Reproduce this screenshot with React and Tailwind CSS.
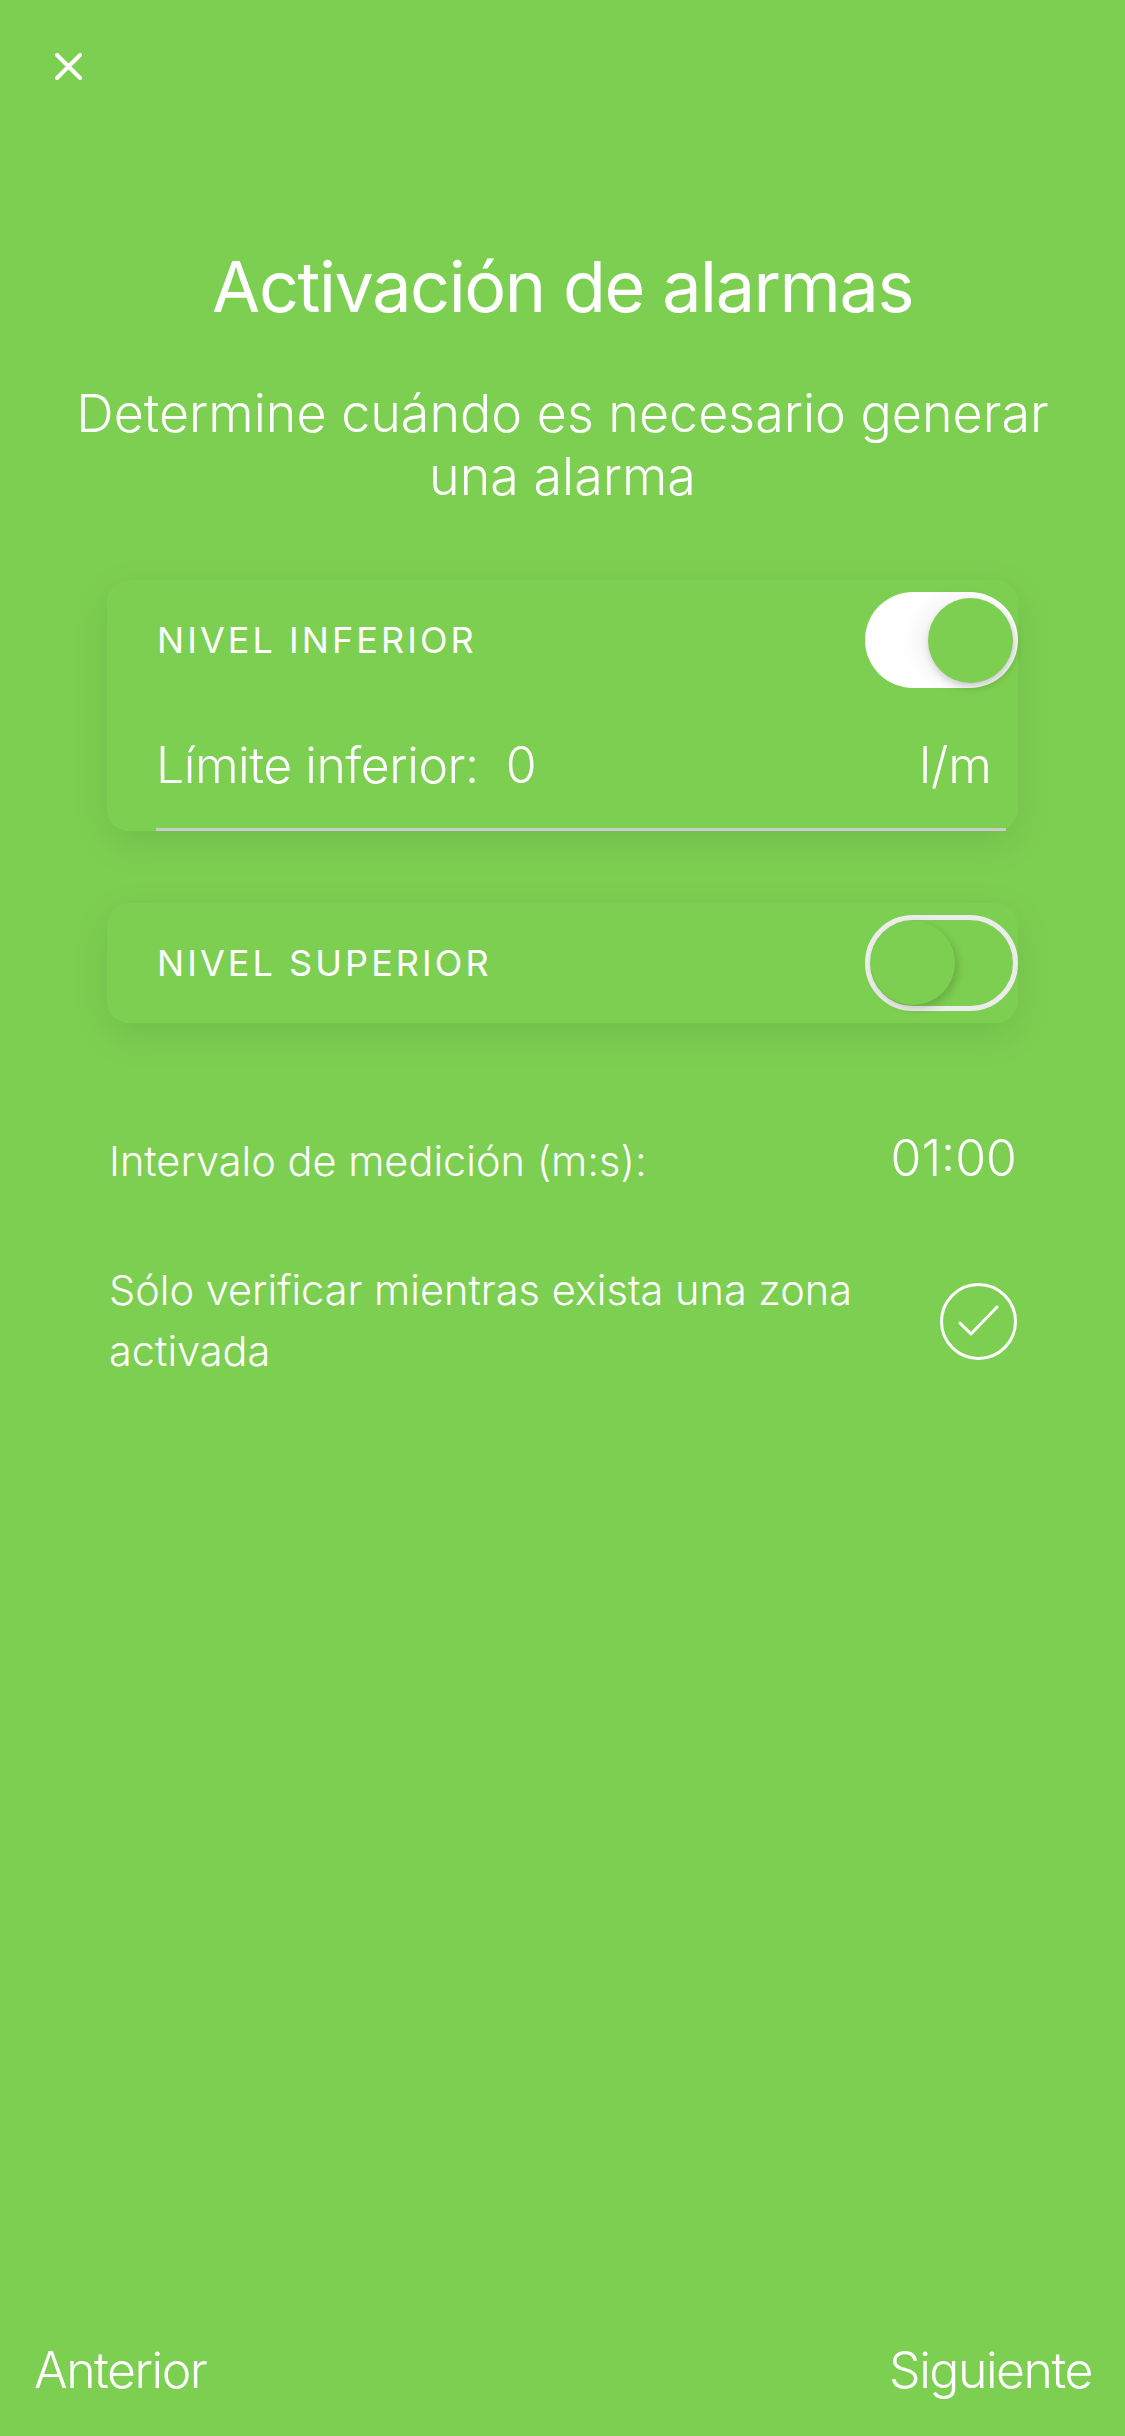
import { useState } from "react";

export default function App() {
  const [lowOn, setLowOn] = useState(true);
  const [highOn, setHighOn] = useState(false);
  const [onlyZone, setOnlyZone] = useState(true);

  return (
    <div className="h-[2436px] w-[1125px] bg-[#7dcf51] flex flex-col text-white font-['Inter',sans-serif]">
      <div className="pt-[53px] pl-[55px]">
        <svg width="27" height="27" viewBox="0 0 27 27" fill="none">
          <path d="M2 2L25 25M25 2L2 25" stroke="white" strokeWidth="4" strokeLinecap="round" />
        </svg>
      </div>

      <h1 className="mt-[172px] text-center text-[70px] leading-[70px] font-normal tracking-[-0.02em]">
        Activación de alarmas
      </h1>

      <p className="mt-[60px] text-center text-[52px] leading-[63px] font-light">
        Determine cuándo es necesario generar
        <br />
        una alarma
      </p>

      {/* Lower level card */}
      <div className="mt-[72px] mx-[107px] h-[251px] rounded-[22px] bg-[#7dcf51] shadow-[0_12px_40px_rgba(0,0,0,0.09)] flex flex-col">
        <div className="mt-[12px] h-[96px] flex items-center justify-between pl-[50px]">
          <span className="text-[36px] leading-[36px] tracking-[0.085em]">NIVEL INFERIOR</span>
          <Toggle on={lowOn} onClick={() => setLowOn(!lowOn)} />
        </div>
        <div className="mt-auto ml-[49px] mr-[12px] border-b-[3px] border-[#c9c9ce] pb-[33px] pr-[14px] flex items-baseline justify-between">
          <span className="text-[50px] leading-[60px] font-light tracking-[-0.01em]">
            Límite inferior:&nbsp; 0
          </span>
          <span className="text-[50px] leading-[60px] font-light">l/m</span>
        </div>
      </div>

      {/* Upper level card */}
      <div className="mt-[72px] mx-[107px] rounded-[22px] bg-[#7dcf51] shadow-[0_12px_40px_rgba(0,0,0,0.09)] py-[12px] flex items-center justify-between pl-[50px]">
        <span className="text-[36px] leading-[36px] tracking-[0.085em]">NIVEL SUPERIOR</span>
        <Toggle on={highOn} onClick={() => setHighOn(!highOn)} />
      </div>

      <div className="mt-[105px] pl-[109px] pr-[108px] flex items-baseline justify-between">
        <span className="text-[41.5px] leading-[60px] font-light">Intervalo de medición (m:s):</span>
        <span className="text-[50px] leading-[60px] font-light">01:00</span>
      </div>

      <div className="mt-[69px] pl-[109px] pr-[108px] flex items-center justify-between">
        <p className="w-[790px] text-[41.5px] leading-[61px] font-light">
          Sólo verificar mientras exista una zona activada
        </p>
        <button onClick={() => setOnlyZone(!onlyZone)} className="w-[77px] h-[77px]">
          <svg width="77" height="77" viewBox="0 0 77 77" fill="none">
            <circle cx="38.5" cy="38.5" r="37" stroke="white" strokeWidth="3" />
            {onlyZone && (
              <path d="M20 40L31 51L57 24" stroke="white" strokeWidth="3" strokeLinecap="round" strokeLinejoin="round" />
            )}
          </svg>
        </button>
      </div>

      <div className="mt-auto pb-[36px] pl-[34px] pr-[33px] flex justify-between">
        <button className="text-[50px] leading-[60px] font-light tracking-[-0.03em]">Anterior</button>
        <button className="text-[50px] leading-[60px] font-light tracking-[-0.03em]">Siguiente</button>
      </div>
    </div>
  );
}

function Toggle({ on, onClick }) {
  if (on) {
    return (
      <button onClick={onClick} className="w-[153px] h-[96px] rounded-full bg-white flex items-center justify-end pr-[5px]">
        <span className="w-[85px] h-[85px] rounded-full bg-[#7dcf51] shadow-[2px_4px_8px_rgba(0,0,0,0.2),-12px_0_20px_rgba(0,0,0,0.05)]" />
      </button>
    );
  }
  return (
    <button onClick={onClick} className="w-[153px] h-[96px] rounded-full border-[5px] border-[#ececec] flex items-center justify-start pl-[1px]">
      <span className="w-[84px] h-[84px] rounded-full bg-[#7dcf51] shadow-[3px_4px_8px_rgba(0,0,0,0.16)]" />
    </button>
  );
}
